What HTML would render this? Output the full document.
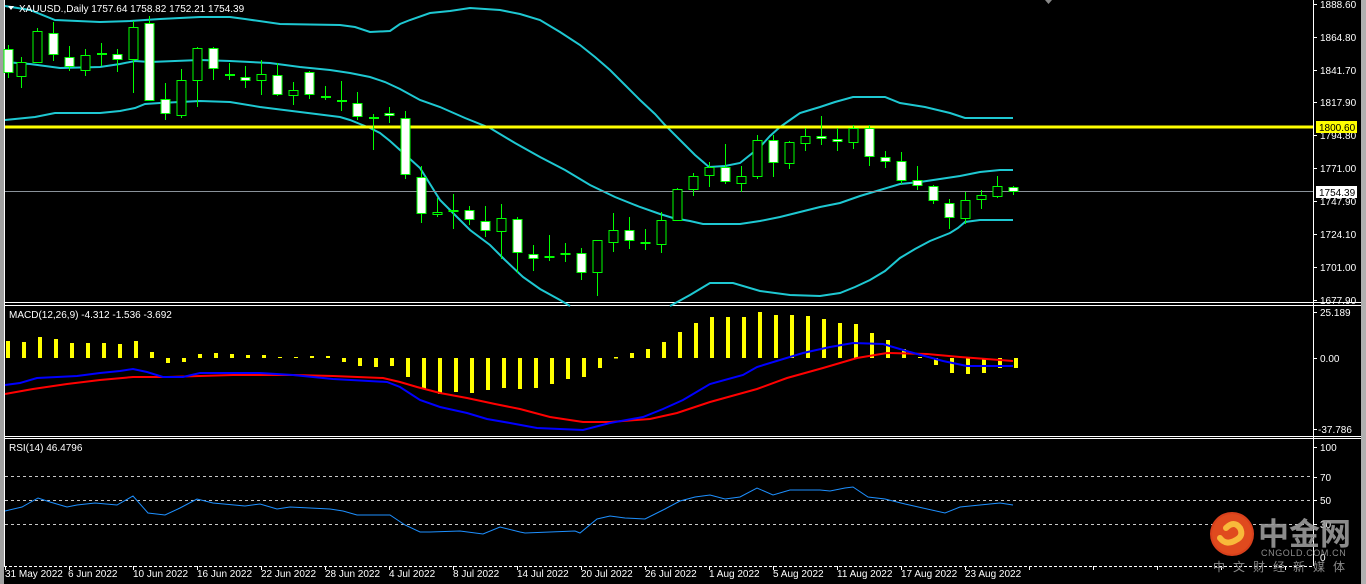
<!DOCTYPE html>
<html><head><meta charset="utf-8"><style>
html,body{margin:0;padding:0;background:#000;}
body{width:1366px;height:584px;overflow:hidden;position:relative;font-family:"Liberation Sans","Noto Sans CJK SC",sans-serif;}
svg{position:absolute;left:0;top:0;}
</style></head><body>
<svg id="s" width="1366" height="584" viewBox="0 0 1366 584" xmlns="http://www.w3.org/2000/svg" font-family="Liberation Sans, sans-serif">
<rect x="0" y="0" width="1366" height="584" fill="#000"/>
<rect x="0" y="0" width="4" height="584" fill="#a0a0a0"/>
<rect x="1361" y="0" width="5" height="584" fill="#b0b0b0"/>
<line x1="4.5" y1="0" x2="4.5" y2="566" stroke="#fff"/>
<line x1="4" y1="302.5" x2="1361" y2="302.5" stroke="#fff"/>
<line x1="4" y1="305.5" x2="1361" y2="305.5" stroke="#fff"/>
<line x1="4" y1="436.5" x2="1361" y2="436.5" stroke="#fff"/>
<line x1="4" y1="438.5" x2="1361" y2="438.5" stroke="#fff"/>
<line x1="1313.5" y1="0" x2="1313.5" y2="566" stroke="#fff"/>
<line x1="4" y1="566.5" x2="1313" y2="566.5" stroke="#fff" stroke-dasharray="3,2"/>
<path d="M1045 0 L1052 0 L1048.5 4 Z" fill="#888"/>
<g id="bands" fill="none" stroke="#1ec8d2" stroke-width="2">
<polyline points="5,6 30,10 55,20 100,22 130,21 160,19 200,17 230,17 245,19 280,24 340,25 355,27 370,32 390,31 400,24 410,20 430,13 450,11 470,8 500,10 520,14 540,20 560,32 580,45 595,57 610,70 625,85 640,100 655,114 665,125 680,140 695,155 709,167 725,166 740,163 750,155 760,147 770,136 780,127 790,120 800,113 810,110 820,107 835,102 853,97 870,97 885,97 900,103 925,107 950,113 965,118 1013,118"/>
<polyline points="5,62 30,64 60,68 100,67 120,64 135,61 150,62 200,60 230,61 270,63 300,67 330,70 350,73 370,77 385,82 400,89 420,100 440,107 465,118 490,128 515,143 540,157 565,170 590,185 615,197 640,207 660,214 673,218 690,221 703,224 740,224 760,221 780,217 800,212 820,207 840,203 860,196 880,190 900,184 920,182 940,179 960,176 980,172 1000,170 1013,170"/>
<polyline points="5,120 35,117 55,113 100,113 120,111 135,108 145,104 160,103 200,101 230,102 260,107 300,112 340,117 350,120 360,124 370,128 380,133 390,141 400,150 410,159 420,168 430,184 440,200 455,215 470,230 490,245 505,260 523,277 540,289 560,300 570,306"/>
<polyline points="670,306 690,295 710,283 733,283 760,291 790,295 820,296 840,293 855,287 870,280 885,271 900,258 915,249 930,241 950,233 958,228 965,222 980,220 1013,220"/>
</g>
<line x1="5" y1="127" x2="1313" y2="127" stroke="#ffff00" stroke-width="3"/>
<line x1="5" y1="191.5" x2="1313" y2="191.5" stroke="#8a929a" stroke-width="1"/>
<g id="candles"></g>
<g id="hist"></g>
<polyline fill="none" stroke="#ff0000" stroke-width="2" points="5,394 33,389 67,384 100,380 133,377 167,377 233,375 293,375 333,376 383,378 400,382 417,387 440,393 467,398 495,404 520,409 550,417 583,422 610,422 650,419 677,413 710,402 757,389 787,378 823,368 857,358 887,353 927,354 960,357 1013,361"/>
<polyline fill="none" stroke="#0000ff" stroke-width="2" points="5,385 20,383 37,378 77,376 100,373 120,371 133,369 147,372 163,377 183,377 200,373 260,373 293,375 333,379 387,382 400,387 420,400 440,407 467,413 487,419 510,423 537,428 583,430 610,423 643,417 663,409 683,400 710,384 743,375 757,367 803,353 830,347 853,343 883,344 910,352 943,361 967,366 1013,366"/>
<g stroke="#c8c8c8" stroke-dasharray="3,3" stroke-width="1">
<line x1="5" y1="476.5" x2="1313" y2="476.5"/>
<line x1="5" y1="500.5" x2="1313" y2="500.5"/>
<line x1="5" y1="524.5" x2="1313" y2="524.5"/>
</g>
<polyline fill="none" stroke="#1e90ff" stroke-width="1" points="5,511 22,507 38,498 50,502 67,507 77,505 95,503 117,505 133,496 148,513 165,515 180,508 197,499 213,503 245,506 260,504 277,509 290,507 330,509 343,511 357,515 390,515 405,525 420,532 430,532 460,531 483,534 500,527 520,532 525,533 550,532 575,531 580,533 597,519 610,516 625,518 645,519 665,509 680,501 695,497 710,495 725,499 740,497 757,488 773,495 790,490 820,490 830,491 845,488 853,487 868,497 885,499 905,504 945,513 960,507 980,505 1000,503 1013,505"/>
<g stroke="#fff" id="ticks"></g>
<g fill="#fff" font-size="10">
<text x="1320" y="8">1888.60</text>
<text x="1320" y="41">1864.80</text>
<text x="1320" y="74">1841.70</text>
<text x="1320" y="106">1817.90</text>
<text x="1320" y="139">1794.80</text>
<text x="1320" y="172">1771.00</text>
<text x="1320" y="205">1747.90</text>
<text x="1320" y="238">1724.10</text>
<text x="1320" y="271">1701.00</text>
<text x="1320" y="304">1677.90</text>
<text x="1320" y="316">25.189</text>
<text x="1320" y="362">0.00</text>
<text x="1318" y="433">-37.786</text>
<text x="1320" y="451">100</text>
<text x="1320" y="481">70</text>
<text x="1320" y="504">50</text>
<text x="1320" y="528">30</text>
<text x="1320" y="561">0</text>
</g>
<rect x="1316" y="121" width="41" height="12" fill="#ffff00"/>
<text x="1319" y="131" font-size="10" fill="#000">1800.60</text>
<rect x="1316" y="186" width="41" height="12" fill="#fff"/>
<text x="1319" y="196" font-size="10" fill="#000">1754.39</text>
<path d="M8 6 L14 6 L11 10 Z" fill="#fff"/>
<text x="19" y="12" font-size="10" fill="#fff">XAUUSD.,Daily  1757.64 1758.82 1752.21 1754.39</text>
<text x="9" y="318" font-size="10" fill="#fff">MACD(12,26,9) -4.312 -1.536 -3.692</text>
<text x="9" y="451" font-size="10" fill="#fff">RSI(14) 46.4796</text>
<g fill="#fff" font-size="10">
<text x="5" y="577">31 May 2022</text>
<text x="68" y="577">6 Jun 2022</text>
<text x="133" y="577">10 Jun 2022</text>
<text x="197" y="577">16 Jun 2022</text>
<text x="261" y="577">22 Jun 2022</text>
<text x="325" y="577">28 Jun 2022</text>
<text x="389" y="577">4 Jul 2022</text>
<text x="453" y="577">8 Jul 2022</text>
<text x="517" y="577">14 Jul 2022</text>
<text x="581" y="577">20 Jul 2022</text>
<text x="645" y="577">26 Jul 2022</text>
<text x="709" y="577">1 Aug 2022</text>
<text x="773" y="577">5 Aug 2022</text>
<text x="837" y="577">11 Aug 2022</text>
<text x="901" y="577">17 Aug 2022</text>
<text x="965" y="577">23 Aug 2022</text>
</g>
<circle cx="1232" cy="534" r="22" fill="#d9401c"/>
<circle cx="1232" cy="534" r="20" fill="#e04a1e"/>
<path d="M1226 528 q8 -8 14 0 q4 8 -4 12 q-10 6 -16 -2" fill="none" stroke="#f8b93a" stroke-width="6" stroke-linecap="round"/>
<text x="1258" y="545" font-size="31" font-weight="bold" fill="#9a9a9a" fill-opacity="0.9" font-family="Noto Sans CJK SC, sans-serif">中金网</text>
<text x="1261" y="556" font-size="9" fill="#9a9a9a" fill-opacity="0.9" letter-spacing="0.6">CNGOLD.COM.CN</text>
<text x="1213" y="571" font-size="12" fill="#8a8a8a" letter-spacing="8" font-family="Noto Sans CJK SC, sans-serif">中文财经新媒体</text>
</svg>
<script>
var NS="http://www.w3.org/2000/svg";
function el(p,t,a){var e=document.createElementNS(NS,t);for(var k in a)e.setAttribute(k,a[k]);p.appendChild(e);return e;}
var C=[[8,45,78,49,73,'w'],[21,57,88,62,77,'b'],[37,28,63,31,63,'b'],[53,22,61,33,55,'w'],[69,46,71,57,67,'w'],[85,49,76,55,71,'b'],[101,43,66,54,54,'d'],[117,49,72,54,60,'w'],[133,21,93,27,60,'b'],[149,16,101,23,101,'w'],[165,83,120,99,114,'w'],[181,69,118,80,116,'b'],[197,47,107,48,81,'b'],[213,47,80,48,69,'w'],[229,63,80,75,75,'d'],[245,66,88,77,81,'w'],[261,60,95,74,81,'b'],[277,63,96,75,95,'w'],[293,82,105,90,96,'b'],[309,71,99,72,95,'w'],[325,86,100,97,97,'d'],[341,81,111,101,101,'d'],[357,92,120,103,117,'w'],[373,114,150,118,118,'d'],[389,107,123,113,116,'w'],[405,111,179,118,175,'w'],[421,166,223,177,214,'w'],[437,198,217,212,215,'b'],[453,194,229,210,212,'b'],[469,206,225,210,220,'w'],[485,206,237,221,231,'w'],[501,204,259,218,232,'b'],[517,217,273,219,253,'w'],[533,245,271,254,259,'w'],[549,235,261,256,258,'b'],[565,243,262,253,255,'b'],[581,248,280,253,273,'w'],[597,240,296,240,273,'b'],[613,213,252,230,243,'b'],[629,217,249,230,241,'w'],[645,229,250,242,244,'w'],[661,212,253,220,245,'b'],[677,188,221,189,221,'b'],[693,173,196,176,190,'b'],[709,162,187,167,176,'b'],[725,144,184,167,182,'w'],[741,166,192,176,184,'b'],[757,135,179,140,177,'b'],[773,135,177,140,163,'w'],[789,141,169,142,164,'b'],[805,128,151,136,144,'b'],[821,116,145,136,139,'w'],[837,128,151,139,142,'w'],[853,125,149,128,143,'b'],[869,125,166,128,157,'w'],[885,151,168,157,162,'w'],[901,152,184,161,181,'w'],[917,166,190,180,186,'w'],[933,185,204,186,201,'w'],[949,199,229,203,218,'w'],[965,192,224,200,219,'b'],[981,190,209,195,200,'b'],[997,176,198,186,197,'b'],[1013,186,195,187,192,'w']];
var g=document.getElementById('candles');
C.forEach(function(c){
 var x=c[0];
 el(g,'line',{x1:x+0.5,y1:c[1],x2:x+0.5,y2:c[2],stroke:'#00ff00','stroke-width':1});
 if(c[5]=='d'){el(g,'rect',{x:x-4,y:c[3]-1,width:10,height:2,fill:'#00ff00'});}
 else{var h=Math.max(c[4]-c[3],2);el(g,'rect',{x:x-4,y:c[3]+0.5,width:9,height:h-1,fill:c[5]=='w'?'#fff':'#000',stroke:'#00ff00','stroke-width':1});}
});
var H=[341,342,337,339,343,343,343,344,341,352,363,362,354,353,354,355,355,357,357,356,356,362,366,367,366,377,389,394,392,393,390,388,389,388,384,379,377,368,358.5,353,349,342,332,323,317,317,317,312,315,315,316,319,323,324,333,340,349,357,365,373,374,373,368,368];
var hg=document.getElementById('hist');
H.forEach(function(v,i){var x=8+16*i;var t=Math.min(v,358),b=Math.max(v,358);if(b-t<1){t=357;b=358.5;}
 el(hg,'rect',{x:x-2,y:t,width:4,height:b-t,fill:'#ffff00'});});
var tk=document.getElementById('ticks');
[4,37,70,102,135,168,201,234,267,300,312,358,429,447,477,500,524].forEach(function(y){el(tk,'line',{x1:1314,y1:y+0.5,x2:1317,y2:y+0.5});});
for(var x=5;x<1313;x+=64){el(tk,'line',{x1:x+0.5,y1:566,x2:x+0.5,y2:570});}
</script>
</body></html>
